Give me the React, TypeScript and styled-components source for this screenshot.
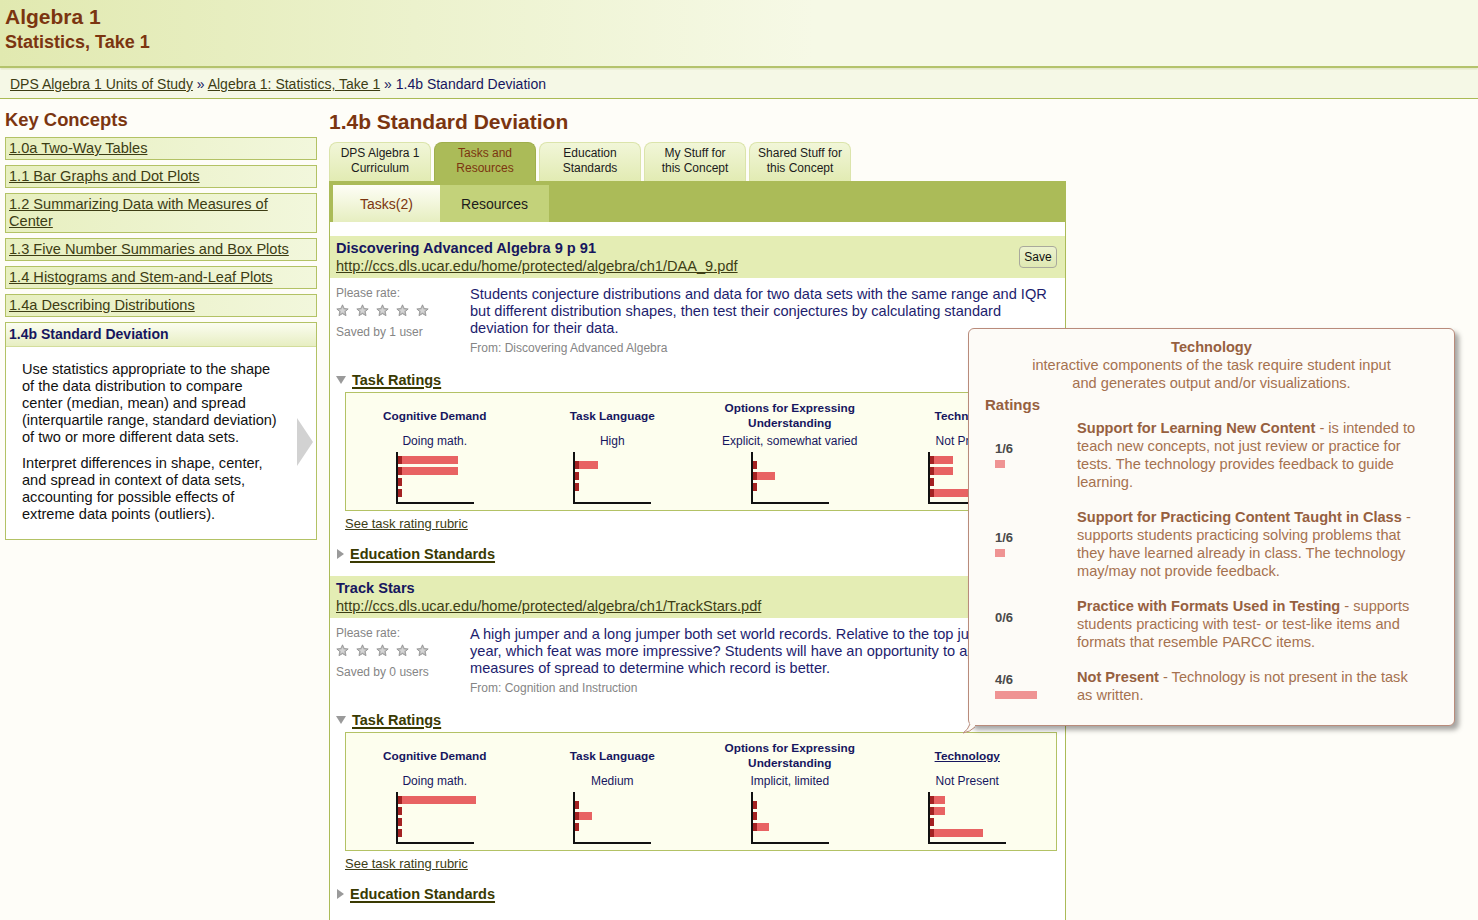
import React from "react";
import styled, { createGlobalStyle } from "styled-components";

const GlobalStyle = createGlobalStyle`
  html, body { margin: 0; padding: 0; }
  body {
    background: #fefdf8;
    font-family: "Liberation Sans", Arial, sans-serif;
    color: #1a1a62;
    overflow: hidden;
  }
`;

const C = {
  brown: "#7b3510",
  navy: "#16165e",
  olive: "#3d3d14",
  green: "#abbb58",
  border: "#b3c265",
  red: "#e86363",
  darkRed: "#a32222",
};

const TEXT = "14.6px";

const Page = styled.div`
  position: relative;
  width: 1478px;
  height: 920px;
  display: flex;
  flex-direction: column;
`;

const Header = styled.header`
  height: 68px;
  padding: 4px 5px 0;
  box-sizing: border-box;
  background: linear-gradient(to right, #e1e9b0 0%, #ecf2cd 28%, #f6f9e6 55%, #f6f9e6 100%);
  border-bottom: 2px solid #b4c36c;
  box-shadow: 0 2px 2px rgba(170, 187, 85, 0.3);
  color: ${C.brown};
  font-weight: bold;
`;

const SiteTitle = styled.div`
  font-size: 21px;
  line-height: 26px;
`;

const SubTitle = styled.div`
  font-size: 18px;
  line-height: 24px;
`;

const Crumbs = styled.nav`
  margin-top: 2px;
  height: 28px;
  line-height: 28px;
  padding-left: 10px;
  background: #f5f8e6;
  border-bottom: 1px solid #aabb55;
  font-size: 14px;
  color: ${C.navy};
`;

const Link = styled.a`
  color: ${C.olive};
  text-decoration: underline;
  cursor: pointer;
`;

const Content = styled.div`
  flex: 1;
  display: flex;
  align-items: flex-start;
`;

const Sidebar = styled.aside`
  width: 312px;
  margin-left: 5px;
  display: flex;
  flex-direction: column;
  gap: 5px;
`;

const SideHeading = styled.h2`
  margin: 10px 0 1px;
  font-size: 18.4px;
  line-height: 22px;
  color: ${C.brown};
`;

const SideItem = styled.div`
  border: 1px solid ${C.border};
  background: linear-gradient(to right, #e7efbf, #f2f7dc);
  padding: 2px 3px;
  font-size: ${TEXT};
  line-height: 17px;
`;

const ActiveCard = styled.div`
  border: 1px solid ${C.border};
  background: #fff;
`;

const ActiveHead = styled.div`
  padding: 3px 3px;
  font-size: 14px;
  line-height: 17px;
  font-weight: bold;
  color: ${C.navy};
  background: linear-gradient(to bottom, #fbfdf1, #e7eec2);
  border-bottom: 1px solid #d3dd9c;
`;

const ActiveBody = styled.div`
  display: flex;
  align-items: center;
  padding: 14px 3px 16px 16px;
`;

const ActiveText = styled.div`
  width: 262px;
  font-size: ${TEXT};
  line-height: 17px;
  color: #111;
  p {
    margin: 0;
  }
  p + p {
    margin-top: 9px;
  }
`;

const NextArrow = styled.div`
  margin-left: auto;
  width: 0;
  height: 0;
  border-top: 24px solid transparent;
  border-bottom: 24px solid transparent;
  border-left: 16px solid #d2d2d2;
`;

const Main = styled.main`
  margin-left: 12px;
  width: 737px;
  display: flex;
  flex-direction: column;
  align-self: stretch;
`;

const MainTitle = styled.h1`
  margin: 11px 0 8px;
  font-size: 21px;
  line-height: 24px;
  color: ${C.brown};
`;

const Tabs = styled.div`
  display: flex;
  gap: 3px;
  height: 39px;
`;

const Tab = styled.div<{ $active?: boolean }>`
  width: 102px;
  box-sizing: border-box;
  border-radius: 8px 8px 0 0;
  border: 1px solid ${(p) => (p.$active ? "#9fae4c" : "#dbe4ab")};
  border-bottom: none;
  background: ${(p) =>
    p.$active ? C.green : "linear-gradient(to bottom, #f1f6d8, #e2ebb3)"};
  color: ${(p) => (p.$active ? C.brown : "#1b1b1b")};
  font-size: 12px;
  line-height: 15px;
  text-align: center;
  display: flex;
  align-items: center;
  justify-content: center;
  padding-bottom: 2px;
`;

const Panel = styled.section`
  flex: 1;
  display: flex;
  flex-direction: column;
`;

const SubTabs = styled.div`
  background: ${C.green};
  padding: 4px 0 0 4px;
  display: flex;
  height: 37px;
`;

const SubTab = styled.div<{ $active?: boolean }>`
  width: ${(p) => (p.$active ? 107 : 109)}px;
  display: flex;
  align-items: center;
  justify-content: center;
  font-size: 14px;
  color: ${(p) => (p.$active ? C.brown : "#1b1b1b")};
  background: ${(p) =>
    p.$active ? "linear-gradient(to bottom, #fefef6, #e6eec0)" : "#c3d27a"};
`;

const PanelBody = styled.div`
  flex: 1;
  background: #fff;
  border-left: 1px solid ${C.green};
  border-right: 1px solid ${C.green};
  padding-top: 14px;
  display: flex;
  flex-direction: column;
  gap: 13px;
`;

const Card = styled.article`
  display: flex;
  flex-direction: column;
`;

const CardHead = styled.div`
  background: #e4edb4;
  padding: 3px 8px 3px 6px;
  display: flex;
  align-items: center;
  justify-content: space-between;
  font-size: ${TEXT};
  line-height: 18px;
`;

const CardTitle = styled.div`
  font-weight: bold;
  color: ${C.navy};
`;

const SaveButton = styled.button`
  height: 22px;
  width: 38px;
  padding: 0;
  border: 1px solid #a9a99c;
  border-radius: 4px;
  background: linear-gradient(to bottom, #ecf2cf, #dfe8b2);
  font-family: "Liberation Sans", Arial, sans-serif;
  font-size: 12px;
  color: #111;
`;

const CardBody = styled.div`
  display: flex;
  padding: 8px 10px 0 6px;
`;

const RateCol = styled.div`
  width: 134px;
  flex: none;
  font-size: 12px;
  line-height: 15px;
  color: #858585;
`;

const Stars = styled.div`
  display: flex;
  gap: 7px;
  margin: 2px 0 8px;
  height: 14px;
  align-items: center;
`;

const Desc = styled.div`
  flex: 1;
  font-size: ${TEXT};
  line-height: 17px;
  color: #1d1d6e;
`;

const From = styled.div`
  margin-top: 4px;
  font-size: 12px;
  line-height: 15px;
  color: #858585;
`;

const Toggle = styled.div<{ $top: number }>`
  display: flex;
  align-items: center;
  gap: 6px;
  padding-left: 6px;
  margin-top: ${(p) => p.$top}px;
  font-size: 14.5px;
  line-height: 18px;
  font-weight: bold;
  a {
    color: #3a3a02;
    text-decoration-thickness: 2px;
    text-underline-offset: 2px;
  }
`;

const TriDown = styled.span`
  width: 0;
  height: 0;
  border-left: 5px solid transparent;
  border-right: 5px solid transparent;
  border-top: 8px solid #9a9a9a;
`;

const TriRight = styled.span`
  width: 0;
  height: 0;
  margin-left: 1px;
  border-top: 5px solid transparent;
  border-bottom: 5px solid transparent;
  border-left: 7px solid #9a9a9a;
`;

const RatingsBox = styled.div`
  margin: 3px 8px 0 15px;
  border: 1px solid #b3c265;
  background: #fdfeee;
  padding: 8px 0 6px;
  display: grid;
  grid-template-columns: repeat(4, 1fr);
`;

const RatingCol = styled.div`
  display: flex;
  flex-direction: column;
  align-items: center;
  color: ${C.navy};
  font-size: 12px;
  line-height: 15px;
`;

const RatingHead = styled.div<{ $link?: boolean }>`
  height: 30px;
  display: flex;
  align-items: center;
  text-align: center;
  font-weight: bold;
  font-size: 11.8px;
  text-decoration: ${(p) => (p.$link ? "underline" : "none")};
`;

const RatingValue = styled.div`
  margin-top: 3px;
  white-space: nowrap;
`;

const ChartFrame = styled.div`
  margin-top: 3px;
  width: 78px;
  height: 52px;
  box-sizing: border-box;
  border-left: 2px solid #111;
  border-bottom: 2px solid #111;
  display: flex;
  flex-direction: column;
  justify-content: center;
  gap: 3px;
  padding-bottom: 2px;
`;

const Bar = styled.div<{ $w: number }>`
  width: ${(p) => p.$w}px;
  height: 8px;
  background: ${C.red};
  display: flex;
`;

const Stub = styled.span`
  width: 4px;
  height: 100%;
  background: ${C.darkRed};
`;

const Rubric = styled.div`
  margin: 5px 0 0 15px;
  font-size: 13px;
  line-height: 15px;
`;

const Tooltip = styled.div`
  position: absolute;
  left: 968px;
  top: 328px;
  width: 487px;
  height: 398px;
  box-sizing: border-box;
  border: 1px solid #b98b7b;
  border-radius: 6px;
  background: #fdfbf7;
  box-shadow: 4px 4px 5px rgba(0, 0, 0, 0.35);
  padding: 9px 16px 0;
  color: #a5714f;
  font-size: ${TEXT};
  line-height: 18px;
  z-index: 5;
`;

const TipTitle = styled.div`
  text-align: center;
  font-weight: bold;
  color: #96603f;
`;

const TipDesc = styled.div`
  text-align: center;
`;

const TipRatings = styled.div`
  margin-top: 4px;
  font-weight: bold;
  font-size: 15px;
  color: #96603f;
`;

const TipList = styled.div`
  margin-top: 5px;
  display: flex;
  flex-direction: column;
  gap: 17px;
`;

const TipRow = styled.div`
  display: grid;
  grid-template-columns: 92px 1fr;
`;

const TipScore = styled.div`
  padding-left: 10px;
  display: flex;
  flex-direction: column;
  justify-content: center;
`;

const ScoreLabel = styled.div`
  font-size: 13px;
  line-height: 14px;
  font-weight: bold;
  color: #4a4a4a;
`;

const ScoreBar = styled.div<{ $w: number }>`
  margin-top: 4px;
  height: 8px;
  width: ${(p) => p.$w}px;
  background: #ef9393;
`;

const TipText = styled.div`
  white-space: nowrap;
  b {
    color: #96603f;
  }
`;

const Tail = styled.svg`
  position: absolute;
  left: -7px;
  bottom: -9px;
`;

const Star = () => (
  <svg width="13" height="13" viewBox="0 0 24 24">
    <polygon
      points="12,1.5 15.1,8.3 22.5,9.1 17,14.1 18.5,21.5 12,17.8 5.5,21.5 7,14.1 1.5,9.1 8.9,8.3"
      fill="#bababa"
      stroke="#8e8e8e"
      strokeWidth="1.5"
      strokeLinejoin="round"
    />
    <polygon points="12,6 13.8,10 18,10.5 14.8,13.3 15.7,17.5 12,15.3 8.3,17.5 9.2,13.3 6,10.5 10.2,10" fill="#d4d4d4" />
  </svg>
);

const Chart = ({ bars }: { bars: number[] }) => (
  <ChartFrame>
    {bars.map((w, i) => (
      <Bar key={i} $w={w}>
        <Stub />
      </Bar>
    ))}
  </ChartFrame>
);

type Rating = { head: React.ReactNode; value: string; bars: number[]; link?: boolean };
type Task = {
  title: string;
  url: string;
  save?: boolean;
  saved: string;
  desc: string;
  from: string;
  ratings: Rating[];
};

const optionsHead = (
  <>
    Options for Expressing
    <br />
    Understanding
  </>
);

const tasks: Task[] = [
  {
    title: "Discovering Advanced Algebra 9 p 91",
    url: "http://ccs.dls.ucar.edu/home/protected/algebra/ch1/DAA_9.pdf",
    save: true,
    saved: "Saved by 1 user",
    desc:
      "Students conjecture distributions and data for two data sets with the same range and IQR but different distribution shapes, then test their conjectures by calculating standard deviation for their data.",
    from: "From: Discovering Advanced Algebra",
    ratings: [
      { head: "Cognitive Demand", value: "Doing math.", bars: [60, 60, 4, 4] },
      { head: "Task Language", value: "High", bars: [23, 4, 4] },
      { head: optionsHead, value: "Explicit, somewhat varied", bars: [4, 22, 4] },
      { head: "Technology", value: "Not Present", bars: [23, 23, 4, 53] },
    ],
  },
  {
    title: "Track Stars",
    url: "http://ccs.dls.ucar.edu/home/protected/algebra/ch1/TrackStars.pdf",
    saved: "Saved by 0 users",
    desc:
      "A high jumper and a long jumper both set world records. Relative to the top jumpers of that year, which feat was more impressive? Students will have an opportunity to apply measures of spread to determine which record is better.",
    from: "From: Cognition and Instruction",
    ratings: [
      { head: "Cognitive Demand", value: "Doing math.", bars: [78, 4, 4, 4] },
      { head: "Task Language", value: "Medium", bars: [4, 17, 4] },
      { head: optionsHead, value: "Implicit, limited", bars: [4, 4, 16] },
      { head: "Technology", value: "Not Present", bars: [15, 15, 4, 53], link: true },
    ],
  },
];

const concepts = [
  "1.0a Two-Way Tables",
  "1.1 Bar Graphs and Dot Plots",
  "1.2 Summarizing Data with Measures of Center",
  "1.3 Five Number Summaries and Box Plots",
  "1.4 Histograms and Stem-and-Leaf Plots",
  "1.4a Describing Distributions",
];

const tabs = [
  ["DPS Algebra 1", "Curriculum"],
  ["Tasks and", "Resources"],
  ["Education", "Standards"],
  ["My Stuff for", "this Concept"],
  ["Shared Stuff for", "this Concept"],
];

const TaskCard = ({ t }: { t: Task }) => (
  <Card>
    <CardHead>
      <div>
        <CardTitle>{t.title}</CardTitle>
        <Link>{t.url}</Link>
      </div>
      {t.save && <SaveButton>Save</SaveButton>}
    </CardHead>
    <CardBody>
      <RateCol>
        <div>Please rate:</div>
        <Stars>
          {[0, 1, 2, 3, 4].map((i) => (
            <Star key={i} />
          ))}
        </Stars>
        <div>{t.saved}</div>
      </RateCol>
      <Desc>
        {t.desc}
        <From>{t.from}</From>
      </Desc>
    </CardBody>
    <Toggle $top={15}>
      <TriDown />
      <Link>Task Ratings</Link>
    </Toggle>
    <RatingsBox>
      {t.ratings.map((r, i) => (
        <RatingCol key={i}>
          <RatingHead $link={r.link}>{r.head}</RatingHead>
          <RatingValue>{r.value}</RatingValue>
          <Chart bars={r.bars} />
        </RatingCol>
      ))}
    </RatingsBox>
    <Rubric>
      <Link>See task rating rubric</Link>
    </Rubric>
    <Toggle $top={14}>
      <TriRight />
      <Link>Education Standards</Link>
    </Toggle>
  </Card>
);

const tipRows: { score: string; w: number; text: React.ReactNode }[] = [
  {
    score: "1/6",
    w: 10,
    text: (
      <>
        <b>Support for Learning New Content</b> - is intended to
        <br />
        teach new concepts, not just review or practice for
        <br />
        tests. The technology provides feedback to guide
        <br />
        learning.
      </>
    ),
  },
  {
    score: "1/6",
    w: 10,
    text: (
      <>
        <b>Support for Practicing Content Taught in Class</b> -
        <br />
        supports students practicing solving problems that
        <br />
        they have learned already in class. The technology
        <br />
        may/may not provide feedback.
      </>
    ),
  },
  {
    score: "0/6",
    w: 0,
    text: (
      <>
        <b>Practice with Formats Used in Testing</b> - supports
        <br />
        students practicing with test- or test-like items and
        <br />
        formats that resemble PARCC items.
      </>
    ),
  },
  {
    score: "4/6",
    w: 42,
    text: (
      <>
        <b>Not Present</b> - Technology is not present in the task
        <br />
        as written.
      </>
    ),
  },
];

export default function App() {
  return (
    <Page>
      <GlobalStyle />
      <Header>
        <SiteTitle>Algebra 1</SiteTitle>
        <SubTitle>Statistics, Take 1</SubTitle>
      </Header>
      <Crumbs>
        <Link>DPS Algebra 1 Units of Study</Link> » <Link>Algebra 1: Statistics, Take 1</Link> » 1.4b
        Standard Deviation
      </Crumbs>
      <Content>
        <Sidebar>
          <SideHeading>Key Concepts</SideHeading>
          {concepts.map((c) => (
            <SideItem key={c}>
              <Link>{c}</Link>
            </SideItem>
          ))}
          <ActiveCard>
            <ActiveHead>1.4b Standard Deviation</ActiveHead>
            <ActiveBody>
              <ActiveText>
                <p>
                  Use statistics appropriate to the shape of the data distribution to compare center
                  (median, mean) and spread (interquartile range, standard deviation) of two or more
                  different data sets.
                </p>
                <p>
                  Interpret differences in shape, center, and spread in context of data sets,
                  accounting for possible effects of extreme data points (outliers).
                </p>
              </ActiveText>
              <NextArrow />
            </ActiveBody>
          </ActiveCard>
        </Sidebar>
        <Main>
          <MainTitle>1.4b Standard Deviation</MainTitle>
          <Tabs>
            {tabs.map((t, i) => (
              <Tab key={i} $active={i === 1}>
                {t[0]}
                <br />
                {t[1]}
              </Tab>
            ))}
          </Tabs>
          <Panel>
            <SubTabs>
              <SubTab $active>Tasks(2)</SubTab>
              <SubTab>Resources</SubTab>
            </SubTabs>
            <PanelBody>
              {tasks.map((t) => (
                <TaskCard key={t.title} t={t} />
              ))}
            </PanelBody>
          </Panel>
        </Main>
      </Content>
      <Tooltip>
        <TipTitle>Technology</TipTitle>
        <TipDesc>
          interactive components of the task require student input
          <br />
          and generates output and/or visualizations.
        </TipDesc>
        <TipRatings>Ratings</TipRatings>
        <TipList>
          {tipRows.map((r, i) => (
            <TipRow key={i}>
              <TipScore>
                <ScoreLabel>{r.score}</ScoreLabel>
                <ScoreBar $w={r.w} />
              </TipScore>
              <TipText>{r.text}</TipText>
            </TipRow>
          ))}
        </TipList>
        <Tail width="14" height="14" viewBox="0 0 14 14">
          <path d="M8 0 L8 5 Q6 10 1 13 Q8 12 13 6 L13 0 Z" fill="#fdfbf7" />
          <path d="M8 4 Q6 10 1 13 Q8 12 13 7" fill="none" stroke="#b98b7b" strokeWidth="1" />
        </Tail>
      </Tooltip>
    </Page>
  );
}
